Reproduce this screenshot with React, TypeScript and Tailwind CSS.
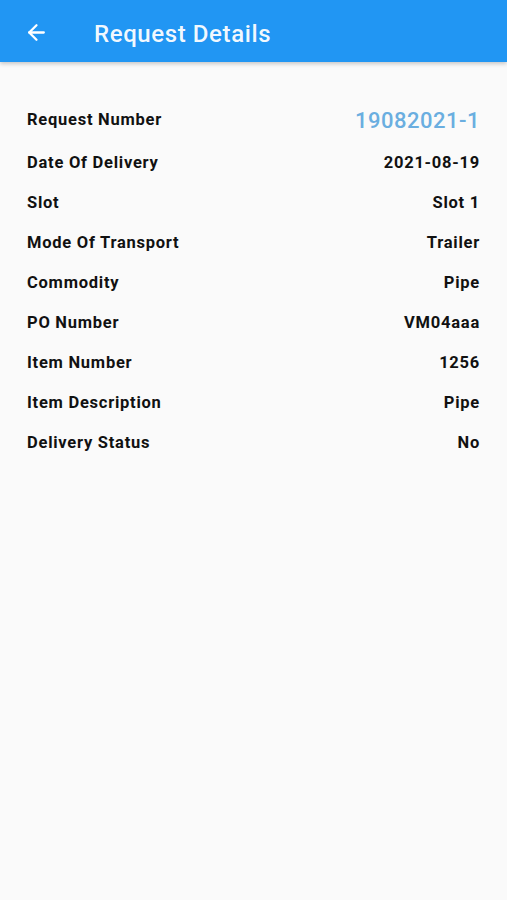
import React from 'react';
import { ArrowLeft } from 'lucide-react';

const rows: { label: string; value: string }[] = [
  { label: 'Date Of Delivery', value: '2021-08-19' },
  { label: 'Slot', value: 'Slot 1' },
  { label: 'Mode Of Transport', value: 'Trailer' },
  { label: 'Commodity', value: 'Pipe' },
  { label: 'PO Number', value: 'VM04aaa' },
  { label: 'Item Number', value: '1256' },
  { label: 'Item Description', value: 'Pipe' },
  { label: 'Delivery Status', value: 'No' },
];

export default function App() {
  return (
    <div className="min-h-[900px] bg-[#fafafa] font-['Roboto',sans-serif]">
      {/* App bar */}
      <header className="h-[62px] bg-[#2196f3] flex items-center shadow-[0_2px_4px_rgba(0,0,0,0.2)]">
        <button className="w-[74px] h-full flex items-center justify-center text-white pt-[3px]">
          <ArrowLeft className="w-[25px] h-[25px] ml-[-2px]" strokeWidth={2.2} />
        </button>
        <h1 className="ml-[20px] pt-[5px] text-[24px] font-medium text-white/95 tracking-[0.6px]">
          Request Details
        </h1>
      </header>

      {/* Details */}
      <div className="px-[27px] pt-[44px]">
        <div className="flex items-center justify-between h-[28px]">
          <span className="text-[16.5px] font-bold text-[#111] tracking-[0.75px]">Request Number</span>
          <span className="text-[22px] font-medium text-[#6aaee0] tracking-[0.5px]">19082021-1</span>
        </div>
        <div className="mt-[9px] flex flex-col">
          {rows.map((r) => (
            <div key={r.label} className="flex items-center justify-between h-[40px]">
              <span className="text-[16.5px] font-bold text-[#111] tracking-[0.75px]">{r.label}</span>
              <span className="text-[16.5px] font-bold text-[#111] tracking-[0.75px]">{r.value}</span>
            </div>
          ))}
        </div>
      </div>
    </div>
  );
}
